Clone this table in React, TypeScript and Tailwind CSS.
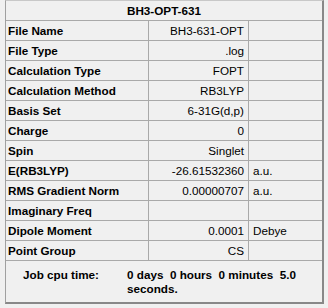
const rows: [string, string, string][] = [
  ["File Name", "BH3-631-OPT", ""],
  ["File Type", ".log", ""],
  ["Calculation Type", "FOPT", ""],
  ["Calculation Method", "RB3LYP", ""],
  ["Basis Set", "6-31G(d,p)", ""],
  ["Charge", "0", ""],
  ["Spin", "Singlet", ""],
  ["E(RB3LYP)", "-26.61532360", "a.u."],
  ["RMS Gradient Norm", "0.00000707", "a.u."],
  ["Imaginary Freq", "", ""],
  ["Dipole Moment", "0.0001", "Debye"],
  ["Point Group", "CS", ""],
];

function SummaryRow({ label, value, unit }: { label: string; value: string; unit: string }) {
  return (
    <div className="grid h-[20px] grid-cols-[143px_100px_1fr] border-b border-[#a9a9a9]">
      <div className="flex items-center border-r border-[#a9a9a9] pl-[2px] font-bold">{label}</div>
      <div className="flex items-center justify-end border-r border-[#a9a9a9] pr-[4px]">{value}</div>
      <div className="flex items-center pl-[4px]">{unit}</div>
    </div>
  );
}

export default function App() {
  return (
    <div
      className="h-[308px] w-[328px] bg-[#f0f0f0] text-[11.7px] leading-none text-black"
      style={{ fontFamily: '"Liberation Sans", Arial, sans-serif' }}
    >
      <div className="ml-[5px] w-[319px] border-t border-r-2 border-b-2 border-l border-t-[#c8c8c8] border-r-[#888888] border-b-[#888888] border-l-[#a0a0a0]">
        <div className="flex h-[20px] items-center justify-center border-b border-[#a9a9a9] font-bold">
          BH3-OPT-631
        </div>
        {rows.map(([label, value, unit]) => (
          <SummaryRow key={label} label={label} value={value} unit={unit} />
        ))}
        <div className="flex h-[41px] pt-[7px] pl-[17px] font-bold leading-[14px]">
          <span className="w-[104px]">Job cpu time:</span>
          <span className="w-[185px] whitespace-pre-wrap">{"0 days  0 hours  0 minutes  5.0 seconds."}</span>
        </div>
      </div>
    </div>
  );
}
